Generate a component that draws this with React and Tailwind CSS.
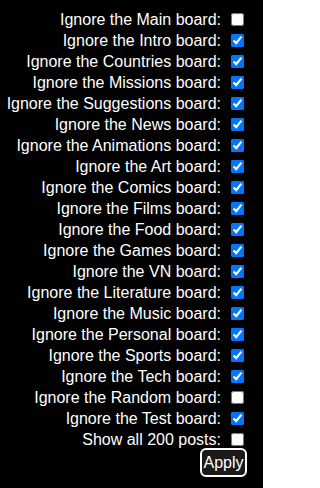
import React, { useState } from "react";

const boards = [
  ["Main", false],
  ["Intro", true],
  ["Countries", true],
  ["Missions", true],
  ["Suggestions", true],
  ["News", true],
  ["Animations", true],
  ["Art", true],
  ["Comics", true],
  ["Films", true],
  ["Food", true],
  ["Games", true],
  ["VN", true],
  ["Literature", true],
  ["Music", true],
  ["Personal", true],
  ["Sports", true],
  ["Tech", true],
  ["Random", false],
  ["Test", true],
];

function Row({ label, checked, onChange }) {
  return (
    <label className="flex h-[21px] items-center justify-end">
      <span className="whitespace-nowrap">{label}</span>
      <input
        type="checkbox"
        className="ml-[10px] h-[13px] w-[13px] accent-[#0075ff]"
        checked={checked}
        onChange={onChange}
      />
    </label>
  );
}

export default function App() {
  const [ignored, setIgnored] = useState(boards.map((b) => b[1]));
  const [showAll, setShowAll] = useState(false);

  const toggle = (i) =>
    setIgnored((prev) => prev.map((v, j) => (j === i ? !v : v)));

  return (
    <div className="min-h-screen w-[263px] bg-black pt-[9px] pr-[19px] text-[16px] text-white font-['Liberation_Sans',Arial,sans-serif]">
      <div className="flex flex-col items-end">
        {boards.map(([name], i) => (
          <Row
            key={name}
            label={`Ignore the ${name} board:`}
            checked={ignored[i]}
            onChange={() => toggle(i)}
          />
        ))}
        <Row
          label="Show all 200 posts:"
          checked={showAll}
          onChange={() => setShowAll(!showAll)}
        />
        <button className="mt-[-2px] mr-[-3px] h-[29px] w-[47px] rounded-[6px] border-2 border-white bg-[#1a1a1a] text-[16px] leading-none text-white">
          Apply
        </button>
      </div>
    </div>
  );
}
